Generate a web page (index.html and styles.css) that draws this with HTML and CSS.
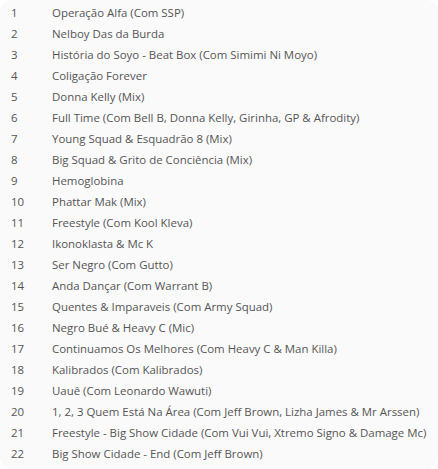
FILE: index.html
```html
<!DOCTYPE html>
<html>
<head>
<meta charset="utf-8">
<link rel="stylesheet" href="styles.css">
</head>
<body>
<div class="panel">
  <ol class="tracks">
    <li class="track"><span class="num">1</span><span class="title">Operação Alfa (Com SSP)</span></li>
    <li class="track"><span class="num">2</span><span class="title">Nelboy Das da Burda</span></li>
    <li class="track"><span class="num">3</span><span class="title">História do Soyo - Beat Box (Com Simimi Ni Moyo)</span></li>
    <li class="track"><span class="num">4</span><span class="title">Coligação Forever</span></li>
    <li class="track"><span class="num">5</span><span class="title">Donna Kelly (Mix)</span></li>
    <li class="track"><span class="num">6</span><span class="title">Full Time (Com Bell B, Donna Kelly, Girinha, GP &amp; Afrodity)</span></li>
    <li class="track"><span class="num">7</span><span class="title">Young Squad &amp; Esquadrão 8 (Mix)</span></li>
    <li class="track"><span class="num">8</span><span class="title">Big Squad &amp; Grito de Conciência (Mix)</span></li>
    <li class="track"><span class="num">9</span><span class="title">Hemoglobina</span></li>
    <li class="track"><span class="num">10</span><span class="title">Phattar Mak (Mix)</span></li>
    <li class="track"><span class="num">11</span><span class="title">Freestyle (Com Kool Kleva)</span></li>
    <li class="track"><span class="num">12</span><span class="title">Ikonoklasta &amp; Mc K</span></li>
    <li class="track"><span class="num">13</span><span class="title">Ser Negro (Com Gutto)</span></li>
    <li class="track"><span class="num">14</span><span class="title">Anda Dançar (Com Warrant B)</span></li>
    <li class="track"><span class="num">15</span><span class="title">Quentes &amp; Imparaveis (Com Army Squad)</span></li>
    <li class="track"><span class="num">16</span><span class="title">Negro Bué &amp; Heavy C (Mic)</span></li>
    <li class="track"><span class="num">17</span><span class="title">Continuamos Os Melhores (Com Heavy C &amp; Man Killa)</span></li>
    <li class="track"><span class="num">18</span><span class="title">Kalibrados (Com Kalibrados)</span></li>
    <li class="track"><span class="num">19</span><span class="title">Uauê (Com Leonardo Wawuti)</span></li>
    <li class="track"><span class="num">20</span><span class="title">1, 2, 3 Quem Está Na Área (Com Jeff Brown, Lizha James &amp; Mr Arssen)</span></li>
    <li class="track"><span class="num">21</span><span class="title">Freestyle - Big Show Cidade (Com Vui Vui, Xtremo Signo &amp; Damage Mc)</span></li>
    <li class="track"><span class="num">22</span><span class="title">Big Show Cidade - End (Com Jeff Brown)</span></li>
  </ol>
</div>
</body>
</html>
```

FILE: styles.css
```css
html, body {
  margin: 0;
  padding: 0;
  background: #ffffff;
}
.panel {
  width: 438px;
  height: 469px;
  box-sizing: border-box;
  background: #fafafa;
  border-radius: 12px;
  padding-top: 2px;
}
.tracks {
  list-style: none;
  margin: 0;
  padding: 0;
}
.track {
  display: flex;
  height: 21px;
  align-items: center;
  font-family: "Open Sans", sans-serif;
  font-size: 11.45px;
  color: #555555;
  white-space: nowrap;
}
.num {
  width: 41px;
  padding-left: 11px;
  flex: none;
}
.title {
  flex: none;
}
```
